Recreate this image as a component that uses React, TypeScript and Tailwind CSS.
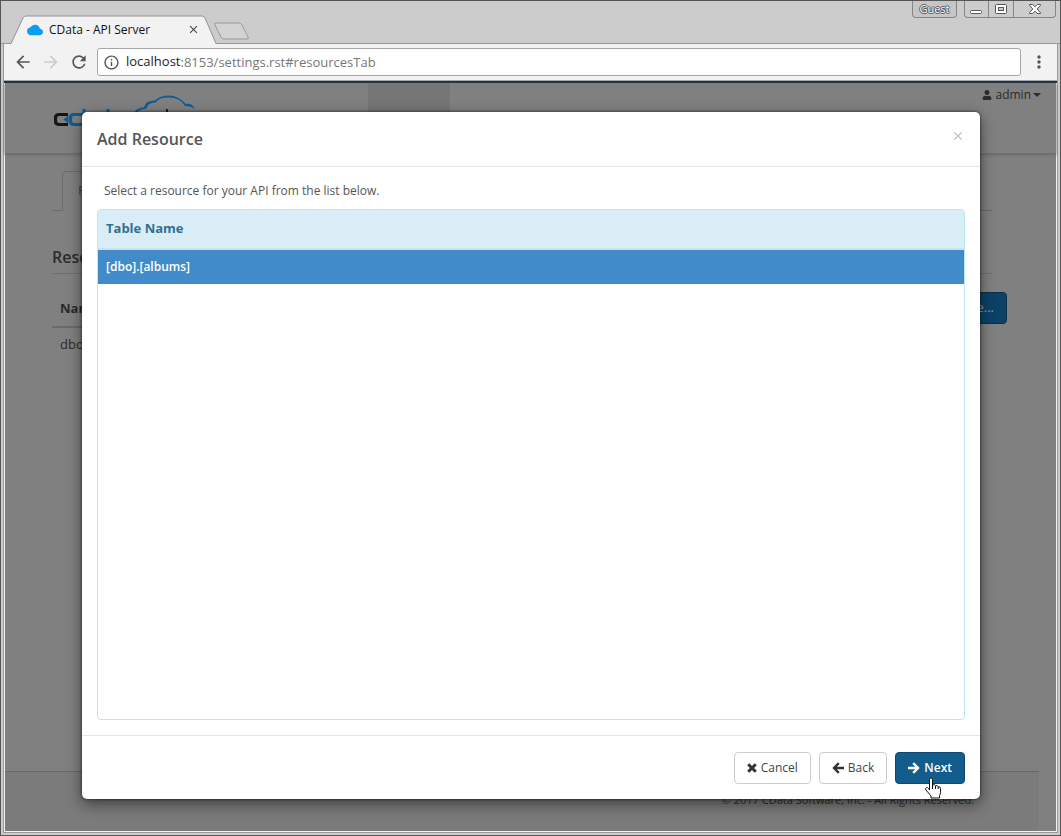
import { useState } from "react";
import { FaUser } from "react-icons/fa";
import { MdArrowBack, MdArrowForward, MdRefresh, MdInfoOutline, MdMoreVert, MdCloud, MdClose } from "react-icons/md";

const tables = ["[dbo].[albums]"];

const WindowControls = () => (
  <div className="flex h-[17px] gap-[7px] pr-1">
    <button
      type="button"
      className="w-[45px] rounded-b-[4px] border border-t-0 border-[#858585] bg-[#c6c6c6] text-[11px] leading-4 text-white [text-shadow:0_1px_#555,1px_0_#555,0_-1px_#555,-1px_0_#555]"
    >
      Guest
    </button>
    <div className="flex rounded-b-[4px] border border-t-0 border-[#858585]">
      <button type="button" aria-label="Minimize" className="flex w-6 items-center justify-center border-r border-[#858585]">
        <svg width="13" height="12" viewBox="0 0 13 12">
          <rect x="0.5" y="7.5" width="11" height="3" rx="1" fill="#fff" stroke="#555" />
        </svg>
      </button>
      <button type="button" aria-label="Maximize" className="flex w-[25px] items-center justify-center border-r border-[#858585]">
        <svg width="13" height="12" viewBox="0 0 13 12">
          <rect x="0.5" y="1.5" width="11" height="9" rx="1" fill="#fff" stroke="#555" />
          <rect x="3.5" y="4.5" width="5" height="3" fill="#ccc" stroke="#555" />
        </svg>
      </button>
      <button type="button" aria-label="Close" className="flex w-[41px] items-center justify-center">
        <svg width="12" height="12" viewBox="0 0 12 12">
          <path
            d="M.5 1.5h3.300L6 3.800l2.200-2.300h3.300v.8L8.200 6l3.300 3.700v.8H8.200L6 8.200l-2.200 2.300H.5v-.8L3.800 6 .5 2.300z"
            fill="#fff"
            stroke="#555"
          />
        </svg>
      </button>
    </div>
  </div>
);

const TabStrip = () => (
  <div className="flex h-[43px] items-start justify-between border-b border-[#999] bg-[#ccc] pl-[9px]">
    <div className="flex pt-[14px]">
      <div className="relative flex h-[29px] w-[208px] items-center pr-[18px] pl-[17px]">
        <svg className="absolute inset-0 overflow-visible" width="208" height="30" viewBox="0 0 208 30">
          <path d="M0 29h1L13 3q1-2 3-2h176q2 0 3 2l11 26h2v2H0z" fill="#f2f2f2" />
          <path d="M0 28.500h1L13 3q1-2 3-2h176q2 0 3 2l11 25.500h2" fill="none" stroke="#929292" />
        </svg>
        <MdCloud className="relative size-4 text-[#0c9cf5]" />
        <span className="relative ml-[6px] flex-1 text-[12px] text-[#111]">CData - API Server</span>
        <button type="button" aria-label="Close tab" className="relative text-[#444]">
          <MdClose className="size-[13px]" />
        </button>
      </div>
      <button type="button" aria-label="New tab" className="-ml-1 mt-[7px] self-start">
        <svg width="36" height="18" viewBox="0 0 36 18">
          <path d="M2 1h23q2 0 3 2l6 12q1 2-1 2H10q-2 0-3-2L1 3Q0 1 2 1z" fill="#d3d3d3" stroke="#999" />
        </svg>
      </button>
    </div>
    <WindowControls />
  </div>
);

const Toolbar = () => (
  <div className="flex h-[37px] items-center border-b border-[#aaa] bg-[#f2f2f2] pr-2 pl-[9px] text-[#555]">
    <button type="button" aria-label="Back">
      <MdArrowBack className="size-5" />
    </button>
    <button type="button" aria-label="Forward" className="ml-2 text-[#ccc]">
      <MdArrowForward className="size-5" />
    </button>
    <button type="button" aria-label="Reload" className="ml-2">
      <MdRefresh className="size-5" />
    </button>
    <div className="ml-2 flex h-7 flex-1 items-center rounded-[3px] border border-[#a6a6a6] bg-white pl-[5px]">
      <MdInfoOutline className="size-[17px]" />
      <label htmlFor="address" className="ml-[6px] text-[13px] text-[#222]">
        localhost
      </label>
      <input
        id="address"
        type="text"
        defaultValue=":8153/settings.rst#resourcesTab"
        className="h-6 flex-1 text-[13px] text-[#777] outline-none"
      />
    </div>
    <button type="button" aria-label="Menu" className="ml-2">
      <MdMoreVert className="size-5" />
    </button>
  </div>
);

const Logo = () => (
  <svg width="146" height="40" viewBox="0 0 146 40" fill="none">
    <path d="M14 19.500H5q-3.500 0-3.500 3.500v3q0 3.500 3.500 3.500h9" stroke="#161616" strokeWidth="3.200" />
    <path d="M29 19.500H20q-3.500 0-3.500 3.500v3q0 3.500 3.500 3.500h9" stroke="#0f5b94" strokeWidth="3.200" />
    <path d="M30 14v17M54 14v17" stroke="#0f5b94" strokeWidth="3" />
    <path d="M9.500 24.500l5-4v8z" fill="#0f5b94" />
    <path
      d="M79 19q4-7 11-6.500 1-7 11-7Q106 .5 115 .5t17 8.500q6-1 9 5-4-3-10-3Q126 2.500 115 2.500T102 7.500q-8-.5-10 6.500-7-1-11 6z"
      fill="#0f5b94"
    />
    <path d="M113 14v8" stroke="#222" strokeWidth="2" />
  </svg>
);

const SettingsPage = () => (
  <div className="flex flex-1 flex-col border border-t-0 border-[#f2f2f2] bg-[#808080] text-[#2b2b2b]">
    <header className="flex h-[71px] items-start justify-between border-b border-[#6e6e6e] pr-[15px] pl-[49px] shadow-[0_1px_3px_#6a6a6a]">
      <div className="flex">
        <a href="#home" aria-label="CData API Server" className="mt-3">
          <Logo />
        </a>
        <div className="ml-[168px] h-[70px] w-[82px] bg-[#767676]" />
      </div>
      <button type="button" className="mt-[3px] flex items-center text-[12px] leading-[18px]">
        <FaUser className="mr-[3px] size-[10px]" />
        admin
        <svg className="ml-[2px]" width="8" height="4" viewBox="0 0 8 4">
          <path d="M0 0h8L4 4z" fill="currentColor" />
        </svg>
      </button>
    </header>

    <main className="flex-1 pr-[64px] pl-[47px]">
      <div className="mt-[17px] flex h-10 border-b border-[#6b6b6b] pl-[10px]">
        <a
          href="#resources"
          className="-mb-px w-[120px] rounded-t-[4px] border border-b-0 border-[#6b6b6b] bg-[#808080] pt-[9px] pl-[15px] text-[13px] text-[#444]"
        >
          Resources
        </a>
      </div>
      <h2 className="mt-[34px] border-b border-[#6e6e6e] pb-[4px] text-[16px] leading-6 font-semibold">Resources</h2>
      <div className="-mr-[15px] mt-[18px] flex items-start">
        <table className="flex-1 text-left text-[13px]">
          <thead>
            <tr className="border-b-2 border-[#6b6b6b]">
              <th className="h-[35px] w-[750px] px-2 font-bold">Name</th>
            </tr>
          </thead>
          <tbody>
            <tr>
              <td className="h-[35px] px-2">dbo.albums</td>
            </tr>
          </tbody>
        </table>
        <button type="button" className="h-8 rounded-[4px] border border-[#0a3049] bg-[#0b4266] px-3 text-[13px] text-[#999]">
          Add Resource...
        </button>
      </div>
    </main>

    <footer className="mr-[17px] h-[60px] border-t border-[#686868] bg-[#7b7b7b] pt-[19px] pr-[65px] text-right text-[11px] leading-[18px]">
      © 2017 CData Software, Inc. - All Rights Reserved.
    </footer>
  </div>
);

const ArrowIcon = ({ className }: { className?: string }) => (
  <svg className={className} width="12" height="12" viewBox="0 0 12 12" fill="none" stroke="currentColor" strokeWidth="2.400">
    <path d="M0 6h9.500M5.200 1.200L10 6l-4.800 4.800" />
  </svg>
);

const CrossIcon = () => (
  <svg width="10" height="10" viewBox="0 0 10 10" stroke="#333" strokeWidth="3">
    <path d="M1.200 1.200l7.600 7.600M8.800 1.200L1.200 8.800" />
  </svg>
);

const ResourceDialog = () => {
  const [selected, setSelected] = useState(tables[0]);

  return (
    <div
      role="dialog"
      aria-labelledby="dialog-title"
      className="rounded-[5px] bg-white text-[#555] shadow-[0_5px_15px_rgba(0,0,0,0.5),0_0_3px_rgba(0,0,0,0.7)]"
    >
      <div className="flex h-[55px] items-center justify-between border-b border-[#e5e5e5] px-[15px]">
        <h1 id="dialog-title" className="text-[16px] font-semibold">
          Add Resource
        </h1>
        <button type="button" aria-label="Close" className="mb-[6px] text-[#bbb]">
          <MdClose className="size-[14px]" />
        </button>
      </div>

      <div className="px-[15px] pt-[14px] pb-[15px]">
        <p className="mb-2 pl-[7px] text-[12px] leading-5">Select a resource for your API from the list below.</p>
        <div className="h-[511px] overflow-hidden rounded-[4px] border border-[#bce8f1]">
          <table className="w-full text-left">
            <thead>
              <tr className="border-b-2 border-[#cde3ec] bg-[#d9edf7] text-[#31708f]">
                <th className="h-[39px] px-2 text-[13px] font-bold">Table Name</th>
              </tr>
            </thead>
            <tbody>
              {tables.map((name) => (
                <tr
                  key={name}
                  onClick={() => setSelected(name)}
                  className={selected === name ? "bg-[#428bca] text-white" : ""}
                >
                  <td className="h-[35px] px-2 text-[12px] font-semibold">{name}</td>
                </tr>
              ))}
            </tbody>
          </table>
        </div>
      </div>

      <div className="flex justify-end gap-2 border-t border-[#e5e5e5] px-[15px] pt-4 pb-[15px] text-[12px] text-[#444]">
        <button type="button" className="flex h-8 items-center gap-1 rounded-[4px] border border-[#ccc] px-3">
          <CrossIcon />
          Cancel
        </button>
        <button type="button" className="flex h-8 items-center gap-1 rounded-[4px] border border-[#ccc] px-3">
          <ArrowIcon className="rotate-180 text-[#333]" />
          Back
        </button>
        <button
          type="button"
          className="flex h-8 items-center gap-1 rounded-[4px] border border-[#0d4870] bg-[#125d8c] px-3 font-semibold text-white"
        >
          <ArrowIcon />
          Next
        </button>
      </div>
    </div>
  );
};

const Pointer = () => (
  <svg className="absolute right-[115px] bottom-0" width="18" height="22" viewBox="0 0 18 22">
    <path
      d="M5.500 13V2.500a1.500 1.500 0 0 1 3 0V8q2-1 3 .8 2-.8 2.700 1 2.300-.4 2.300 1.700v4q0 1.500-1 3v2.500H7V19l-5-6q-1-1.500.3-2.300t2.200.8z"
      fill="#fff"
      stroke="#111"
    />
    <path d="M8.500 8v4M11.500 9v3M14.200 10v2" stroke="#111" />
  </svg>
);

export default function App() {
  return (
    <div className="flex min-h-screen flex-col border border-[#555] bg-[#ccc] font-['Open_Sans','Noto_Sans',sans-serif]">
      <TabStrip />
      <div className="mx-[2px] mb-[2px] flex flex-1 flex-col border border-t-0 border-[#999]">
        <Toolbar />
        <div className="relative flex flex-1 flex-col border-t-2 border-[#15304a]">
          <SettingsPage />
          <div className="absolute inset-x-0 top-[29px] z-10 pr-[77px] pl-[78px]">
            <ResourceDialog />
            <Pointer />
          </div>
        </div>
      </div>
    </div>
  );
}
